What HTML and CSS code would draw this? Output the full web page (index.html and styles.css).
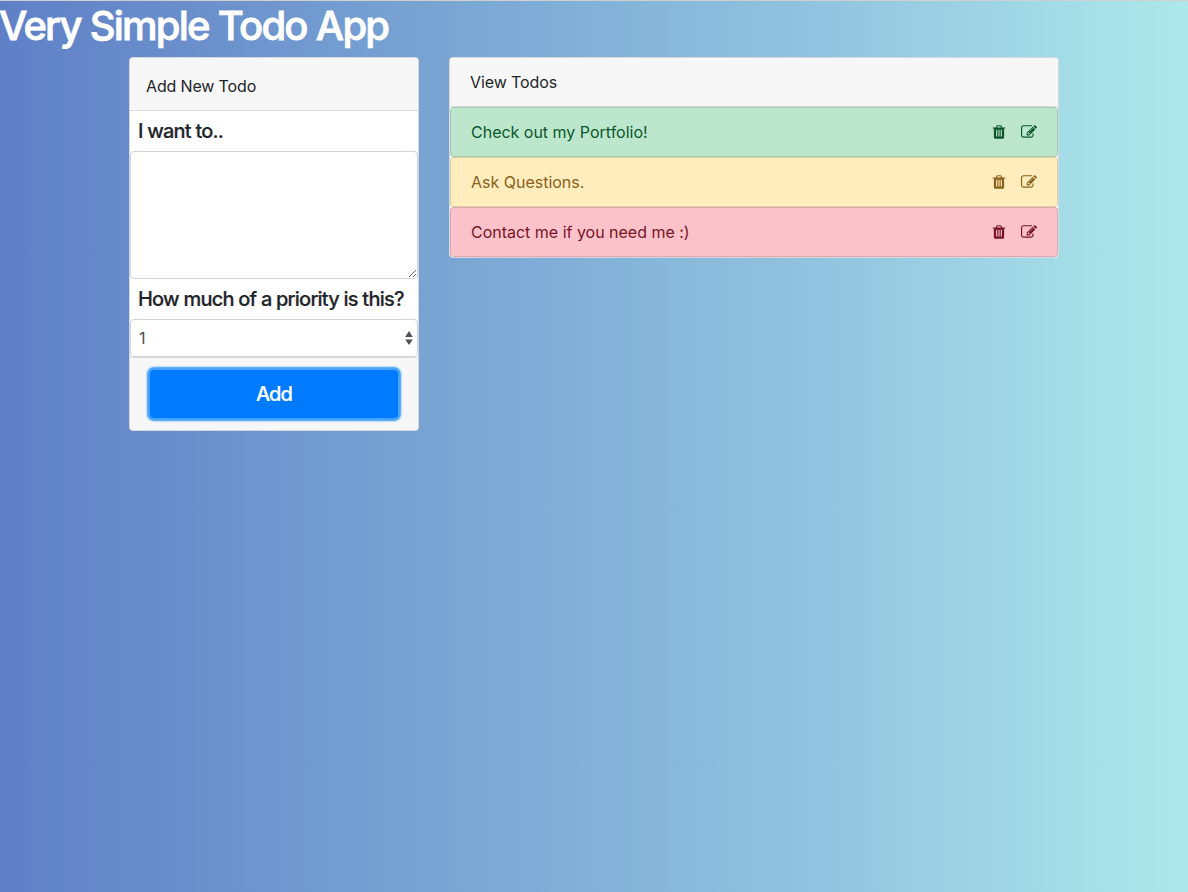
FILE: index.html
```html
<!DOCTYPE html>
<html lang="en">
<head>
<meta charset="utf-8">
<title>Very Simple Todo App</title>
<link rel="stylesheet" href="styles.css">
</head>
<body>
<svg class="sprite" aria-hidden="true">
  <symbol id="trash" viewBox="0 0 1792 1792"><path d="M704 1376v-704q0-14-9-23t-23-9h-64q-14 0-23 9t-9 23v704q0 14 9 23t23 9h64q14 0 23-9t9-23zm256 0v-704q0-14-9-23t-23-9h-64q-14 0-23 9t-9 23v704q0 14 9 23t23 9h64q14 0 23-9t9-23zm256 0v-704q0-14-9-23t-23-9h-64q-14 0-23 9t-9 23v704q0 14 9 23t23 9h64q14 0 23-9t9-23zm-544-992h448l-48-117q-7-9-17-11h-317q-10 2-17 11zm928 32v64q0 14-9 23t-23 9h-96v948q0 83-47 143.500t-113 60.500h-832q-66 0-113-58.500t-47-141.500v-952h-96q-14 0-23-9t-9-23v-64q0-14 9-23t23-9h309l70-167q15-37 54-63t79-26h320q40 0 79 26t54 63l70 167h309q14 0 23 9t9 23z"/></symbol>
  <symbol id="edit" viewBox="0 0 1792 1792"><path d="M888 1184l116-116-152-152-116 116v56h96v96h56zm440-720q-16-16-33 1l-350 350q-17 17-1 33t33-1l350-350q17-17 1-33zm80 594v190q0 119-84.500 203.500t-203.500 84.500h-832q-119 0-203.500-84.500t-84.500-203.500v-832q0-119 84.500-203.500t203.500-84.500h832q63 0 117 25 15 7 18 23 3 17-9 29l-49 49q-14 14-32 8-23-6-45-6h-832q-66 0-113 47t-47 113v832q0 66 47 113t113 47h832q66 0 113-47t47-113v-126q0-13 9-22l64-64q15-15 35-7t20 29zm-96-738l288 288-672 672h-288v-288zm444 132l-92 92-288-288 92-92q28-28 68-28t68 28l152 152q28 28 28 68t-28 68z"/></symbol>
</svg>
<h1 class="title">Very Simple Todo App</h1>
<main class="columns">
  <form class="card form-card">
    <div class="card-header">Add New Todo</div>
    <label class="label" for="todo">I want to..</label>
    <textarea class="control area" id="todo"></textarea>
    <label class="label">How much of a priority is this?</label>
    <div class="control select"><span>1</span>
      <svg class="arrows" viewBox="0 0 8 14"><path d="M0.200 6 4 0l3.800 6zM0.200 8.500h7.600L4 14z"/></svg>
    </div>
    <div class="card-footer"><button class="add" type="button">Add</button></div>
  </form>
  <section class="card list-card">
    <div class="list-header">View Todos</div>
    <div class="todo success"><span class="text">Check out my Portfolio!</span><svg class="icon trash"><use href="#trash"/></svg><svg class="icon"><use href="#edit"/></svg></div>
    <div class="todo warning"><span class="text">Ask Questions.</span><svg class="icon trash"><use href="#trash"/></svg><svg class="icon"><use href="#edit"/></svg></div>
    <div class="todo danger"><span class="text">Contact me if you need me :)</span><svg class="icon trash"><use href="#trash"/></svg><svg class="icon"><use href="#edit"/></svg></div>
  </section>
</main>
</body>
</html>
```
FILE: styles.css
```css
* { box-sizing: border-box; }
html { height: 100%; }
body {
  margin: 0;
  height: 100%;
  overflow: hidden;
  border-top: 1px solid #cfd0d0;
  background: linear-gradient(to right, #5f80c7, #698dcb 14%, #76a1d2 33%, #83b1d8 50%, #92c5e0 70%, #ade8ea);
  font: 400 16px/24px Inter, "Liberation Sans", sans-serif;
  color: #212529;
}
.sprite { display: none; }
.title {
  margin: 0 0 7px -1px;
  padding-top: 1px;
  font-size: 40px;
  line-height: 48px;
  font-weight: 500;
  -webkit-text-stroke: 0.8px currentColor;
  letter-spacing: -1.8px;
  word-spacing: 0.3px;
  color: #fff;
  white-space: nowrap;
}
.columns {
  display: grid;
  grid-template-columns: 290px 610px;
  column-gap: 30px;
  align-items: start;
  margin-left: 129px;
}
.card {
  border: 1px solid #d5d9df;
  border-radius: 4px;
  background: #fff;
  overflow: hidden;
}
.card-header {
  height: 53px;
  padding: 16px 16px 12px;
  border-bottom: 1px solid #d9dadb;
  background: #f7f7f7;
  letter-spacing: -0.15px;
}
.label {
  display: block;
  padding: 8px;
  font-size: 20px;
  line-height: 24px;
  font-weight: 500;
  -webkit-text-stroke: 0.2px currentColor;
  letter-spacing: -0.78px;
  white-space: nowrap;
}
.control {
  display: block;
  width: 100%;
  border: 1px solid #ced4da;
  border-radius: 4px;
  background: #fff;
}
.area { height: 128px; margin: 0; }
.select {
  display: flex;
  align-items: center;
  justify-content: space-between;
  height: 38px;
  padding: 0 4px 0 8px;
  color: #495057;
}
.arrows { width: 8px; height: 14px; fill: #495057; }
.card-footer {
  height: 73px;
  padding: 12px 20px;
  border-top: 1px solid #d9dadb;
  background: #f7f7f7;
}
.add {
  display: block;
  width: 100%;
  height: 48px;
  padding: 0;
  border: 0;
  border-radius: 4px;
  background: #007bff;
  box-shadow: 0 0 0 2.500px #46a4fb, 0 0 2px 3px #46a4fb;
  color: #fff;
  font: 500 20px/30px Inter, sans-serif;
  -webkit-text-stroke: 0.2px currentColor;
  letter-spacing: -0.9px;
}
.list-header {
  height: 49px;
  padding: 12px 20px;
  border-bottom: 1px solid #d9dadb;
  background: #f7f7f7;
  letter-spacing: -0.1px;
}
.todo {
  display: flex;
  align-items: center;
  height: 50px;
  padding: 0 20px;
  border: 1px solid rgba(0, 0, 0, .125);
  border-radius: 4px;
}
.text { flex: 1; letter-spacing: -0.01px; }
.icon { width: 16px; height: 16px; fill: currentColor; }
.icon + .icon { margin-left: 14.500px; }
.success { background-color: #bde7cd; color: #0b562a; }
.warning { background-color: #ffedbe; color: #89621c; }
.danger { background-color: #fbc2c9; color: #771427; }
```
